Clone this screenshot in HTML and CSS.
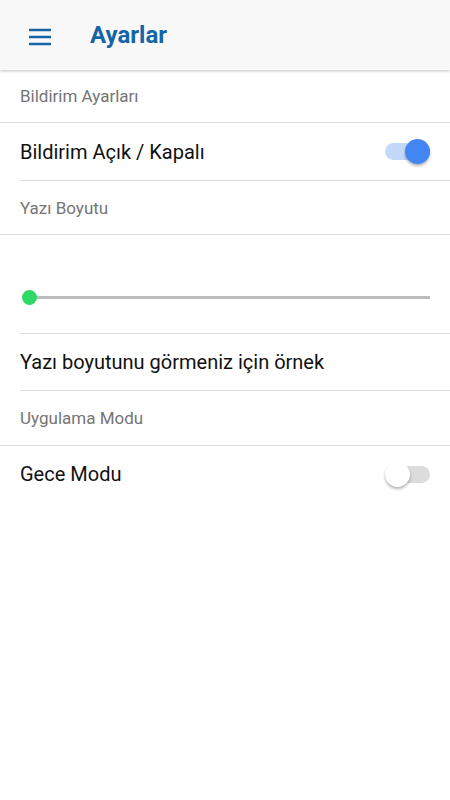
FILE: index.html
```html
<!DOCTYPE html>
<html lang="tr">
<head>
<meta charset="utf-8">
<link rel="stylesheet" href="styles.css">
</head>
<body>
<header class="appbar">
  <svg class="menu" width="24" height="24" viewBox="0 0 24 24"><path d="M1 6h22M1 13h22M1 20h22" stroke="#1565a6" stroke-width="2.6" fill="none"/></svg>
  <h1 class="title">Ayarlar</h1>
</header>
<main class="list">
  <div class="section s1">Bildirim Ayarları</div>
  <div class="item i1">
    <span class="label">Bildirim Açık / Kapalı</span>
    <span class="toggle on"><span class="track"></span><span class="knob"></span></span>
  </div>
  <div class="section s2">Yazı Boyutu</div>
  <div class="item slider-item">
    <div class="slider"><span class="rail"></span><span class="thumb"></span></div>
  </div>
  <div class="item i3"><span class="label">Yazı boyutunu görmeniz için örnek</span></div>
  <div class="section s3">Uygulama Modu</div>
  <div class="item i4 last">
    <span class="label">Gece Modu</span>
    <span class="toggle off"><span class="track"></span><span class="knob"></span></span>
  </div>
</main>
</body>
</html>
```
FILE: styles.css
```css
* { box-sizing: border-box; }
html, body { margin: 0; padding: 0; background: #fff; }
body { font-family: Roboto, "Noto Sans", sans-serif; width: 450px; height: 800px; overflow: hidden; }

.appbar {
  height: 70px;
  background: #f8f8f8;
  display: flex;
  align-items: center;
  padding-left: 28px;
  box-shadow: 0 1px 3px rgba(0,0,0,0.25);
  position: relative;
  z-index: 2;
}
.menu { display: block; margin-top: 1px; }
.title {
  margin: 0 0 0 38px;
  font-size: 24px;
  font-weight: 700;
  color: #1565a6;
}

.list { display: flex; flex-direction: column; }

.section {
  display: flex;
  align-items: center;
  padding-left: 20px;
  font-size: 17px;
  color: #757575;
  border-bottom: 1px solid #dcdcdc;
}
.s1 { height: 53px; }
.s2 { height: 54px; }
.s3 { height: 55px; }

.item {
  display: flex;
  align-items: center;
  justify-content: space-between;
  margin-left: 20px;
  padding-right: 20px;
  font-size: 20px;
  color: #111;
  border-bottom: 1px solid #dcdcdc;
}
.item.last { border-bottom: none; }
.i1 { height: 58px; }
.i3 { height: 57px; }
.i4 { height: 56px; }
.slider-item { height: 99px; align-items: flex-start; padding-top: 55px; }

.toggle { position: relative; width: 45px; height: 25px; display: block; }
.track {
  position: absolute; left: 0; top: 4px; width: 45px; height: 17px; border-radius: 9px;
}
.knob {
  position: absolute; top: 0; width: 25px; height: 25px; border-radius: 50%;
  box-shadow: 0 2px 3px rgba(0,0,0,0.3);
}
.toggle.on .track { background: #c4d8fb; }
.toggle.on .knob { left: 20px; background: #4286f4; }
.toggle.off .track { background: #dcdcdc; }
.toggle.off .knob { left: 0; background: #fff; }

.slider { position: relative; width: 410px; height: 15px; }
.rail { position: absolute; left: 9px; right: 0; top: 6px; height: 3px; background: #bdbdbd; }
.thumb {
  position: absolute; left: 2px; top: 0; width: 15px; height: 15px; border-radius: 50%;
  background: #2ed966;
}
```
